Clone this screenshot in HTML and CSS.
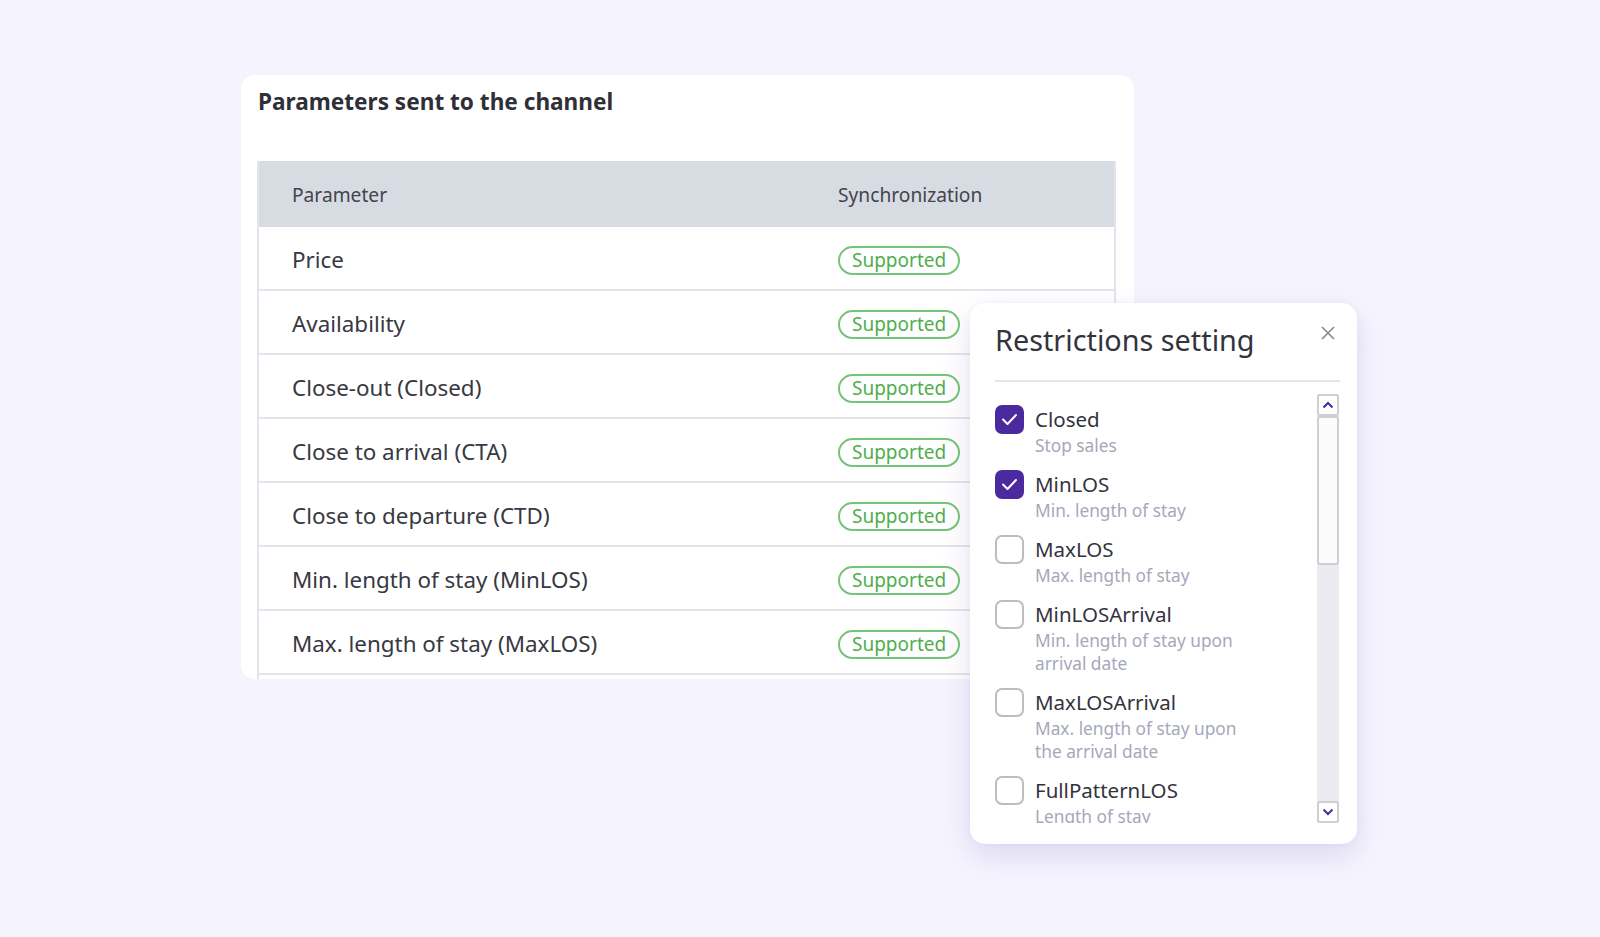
FILE: index.html
```html
<!DOCTYPE html>
<html lang="en">
<head>
<meta charset="utf-8">
<title>Parameters sent to the channel</title>
<link rel="stylesheet" href="styles.css">
</head>
<body>
<main class="stage">
  <section class="card">
    <h2 class="card-title">Parameters sent to the channel</h2>
    <div class="table">
      <div class="row head">
        <div class="cell">Parameter</div>
        <div class="cell">Synchronization</div>
      </div>
      <div class="row"><div class="cell">Price</div><div class="cell"><span class="badge">Supported</span></div></div>
      <div class="row"><div class="cell">Availability</div><div class="cell"><span class="badge">Supported</span></div></div>
      <div class="row"><div class="cell">Close-out (Closed)</div><div class="cell"><span class="badge">Supported</span></div></div>
      <div class="row"><div class="cell">Close to arrival (CTA)</div><div class="cell"><span class="badge">Supported</span></div></div>
      <div class="row"><div class="cell">Close to departure (CTD)</div><div class="cell"><span class="badge">Supported</span></div></div>
      <div class="row"><div class="cell">Min. length of stay (MinLOS)</div><div class="cell"><span class="badge">Supported</span></div></div>
      <div class="row"><div class="cell">Max. length of stay (MaxLOS)</div><div class="cell"><span class="badge">Supported</span></div></div>
    </div>
  </section>

  <aside class="popup">
    <div class="popup-head">
      <h3 class="popup-title">Restrictions setting</h3>
      <button class="close" aria-label="Close">
        <svg width="16" height="16" viewBox="0 0 16 16"><path d="M2 2L14 14M14 2L2 14" stroke="#8c8c90" stroke-width="1.7" fill="none"/></svg>
      </button>
    </div>
    <div class="popup-body">
      <ul class="options">
        <li class="option">
          <span class="check on"><svg width="17" height="13" viewBox="0 0 17 13"><path d="M2 6.5L6.5 11L15 2" stroke="#fff" stroke-width="2" fill="none" stroke-linecap="round" stroke-linejoin="round"/></svg></span>
          <div class="opt-text"><div class="opt-label">Closed</div><div class="opt-sub">Stop sales</div></div>
        </li>
        <li class="option">
          <span class="check on"><svg width="17" height="13" viewBox="0 0 17 13"><path d="M2 6.5L6.5 11L15 2" stroke="#fff" stroke-width="2" fill="none" stroke-linecap="round" stroke-linejoin="round"/></svg></span>
          <div class="opt-text"><div class="opt-label">MinLOS</div><div class="opt-sub">Min. length of stay</div></div>
        </li>
        <li class="option">
          <span class="check"></span>
          <div class="opt-text"><div class="opt-label">MaxLOS</div><div class="opt-sub">Max. length of stay</div></div>
        </li>
        <li class="option">
          <span class="check"></span>
          <div class="opt-text"><div class="opt-label">MinLOSArrival</div><div class="opt-sub">Min. length of stay upon<br>arrival date</div></div>
        </li>
        <li class="option">
          <span class="check"></span>
          <div class="opt-text"><div class="opt-label">MaxLOSArrival</div><div class="opt-sub">Max. length of stay upon<br>the arrival date</div></div>
        </li>
        <li class="option">
          <span class="check"></span>
          <div class="opt-text"><div class="opt-label">FullPatternLOS</div><div class="opt-sub">Length of stay</div></div>
        </li>
      </ul>
      <div class="scrollbar">
        <span class="sb-btn"><svg width="12" height="8" viewBox="0 0 12 8"><path d="M1.5 6.5L6 2L10.5 6.5" stroke="#4b2aa0" stroke-width="2" fill="none"/></svg></span>
        <span class="sb-thumb"></span>
        <span class="sb-track"></span>
        <span class="sb-btn"><svg width="12" height="8" viewBox="0 0 12 8"><path d="M1.5 1.5L6 6L10.5 1.5" stroke="#4b2aa0" stroke-width="2" fill="none"/></svg></span>
      </div>
    </div>
  </aside>
</main>
</body>
</html>
```

FILE: styles.css
```css
* { box-sizing: border-box; }
html, body { margin: 0; padding: 0; }
body {
  background: #f5f4fe;
  font-family: "Noto Sans", "Open Sans", "Liberation Sans", sans-serif;
  color: #35353f;
  width: 1600px;
  height: 937px;
  overflow: hidden;
}
.stage {
  position: relative;
  width: 1600px;
  height: 937px;
  padding: 75px 0 0 241px;
}
.card {
  width: 893px;
  height: 604px;
  background: #fff;
  border-radius: 14px;
  overflow: hidden;
  padding: 12px 18px 0 16px;
}
.card-title {
  margin: 0 0 44px 1px;
  font-size: 22.6px;
  line-height: 30px;
  font-weight: 700;
  color: #2f2f38;
}
.table {
  height: 560px;
  border-left: 2px solid #e3e5ec;
  border-right: 2px solid #e3e5ec;
}
.row {
  display: grid;
  grid-template-columns: 546px 1fr;
  height: 64px;
  align-items: center;
  border-bottom: 2px solid #e3e5ec;
  font-size: 22.4px;
  color: #383842;
  padding-top: 2px;
}
.row.head {
  height: 66px;
  background: #d7dbe2;
  border-bottom: none;
  font-size: 19.2px;
  color: #44444e;
  padding-top: 1px;
}
.cell { padding-left: 33px; }
.badge {
  display: inline-block;
  height: 29px;
  line-height: 25px;
  padding: 0 12px;
  border: 2px solid #76c476;
  border-radius: 15px;
  color: #4fae4f;
  font-size: 19px;
}
.popup {
  position: absolute;
  left: 970px;
  top: 303px;
  width: 387px;
  height: 541px;
  background: #fff;
  border-radius: 15px;
  box-shadow: 0 12px 30px rgba(90, 80, 170, 0.16), 0 0 6px rgba(90, 80, 170, 0.06);
  padding: 18px 18px 21px 25px;
  display: flex;
  flex-direction: column;
}
.popup-head {
  display: flex;
  justify-content: space-between;
  align-items: flex-start;
  border-bottom: 2px solid #e4e5eb;
  padding-bottom: 21px;
  margin-right: -1px;
}
.popup-title {
  margin: 0;
  font-size: 28.8px;
  line-height: 38px;
  font-weight: 400;
  color: #33333c;
}
.close {
  border: 0;
  background: none;
  padding: 0;
  margin: 4px 4px 0 0;
  width: 16px;
  height: 16px;
  display: flex;
}
.popup-body {
  display: flex;
  margin-top: 12px;
  height: 429px;
}
.options {
  flex: 1;
  list-style: none;
  margin: 0;
  padding: 10px 0 0 0;
  overflow: hidden;
  display: flex;
  flex-direction: column;
  gap: 12px;
}
.option {
  display: flex;
  gap: 11px;
  align-items: flex-start;
}
.check {
  flex: none;
  width: 29px;
  height: 29px;
  border: 2px solid #bcbcc2;
  border-radius: 7px;
  margin-top: 1px;
  display: flex;
  align-items: center;
  justify-content: center;
}
.check.on {
  background: #4b2aa0;
  border-color: #4b2aa0;
}
.opt-label {
  font-size: 20.5px;
  line-height: 30px;
  color: #33333c;
}
.opt-sub {
  font-size: 17.3px;
  line-height: 23px;
  color: #a5a8ba;
}
.scrollbar {
  flex: none;
  width: 22px;
  display: flex;
  flex-direction: column;
  background: #e9ebf1;
}
.sb-btn {
  flex: none;
  height: 22px;
  border: 2px solid #cfcfd3;
  border-radius: 3px;
  background: #fff;
  display: flex;
  align-items: center;
  justify-content: center;
}
.sb-thumb {
  flex: none;
  height: 149px;
  border: 2px solid #cfcfd3;
  border-radius: 3px;
  background: #fbfbfc;
}
.sb-track { flex: 1; }
```
